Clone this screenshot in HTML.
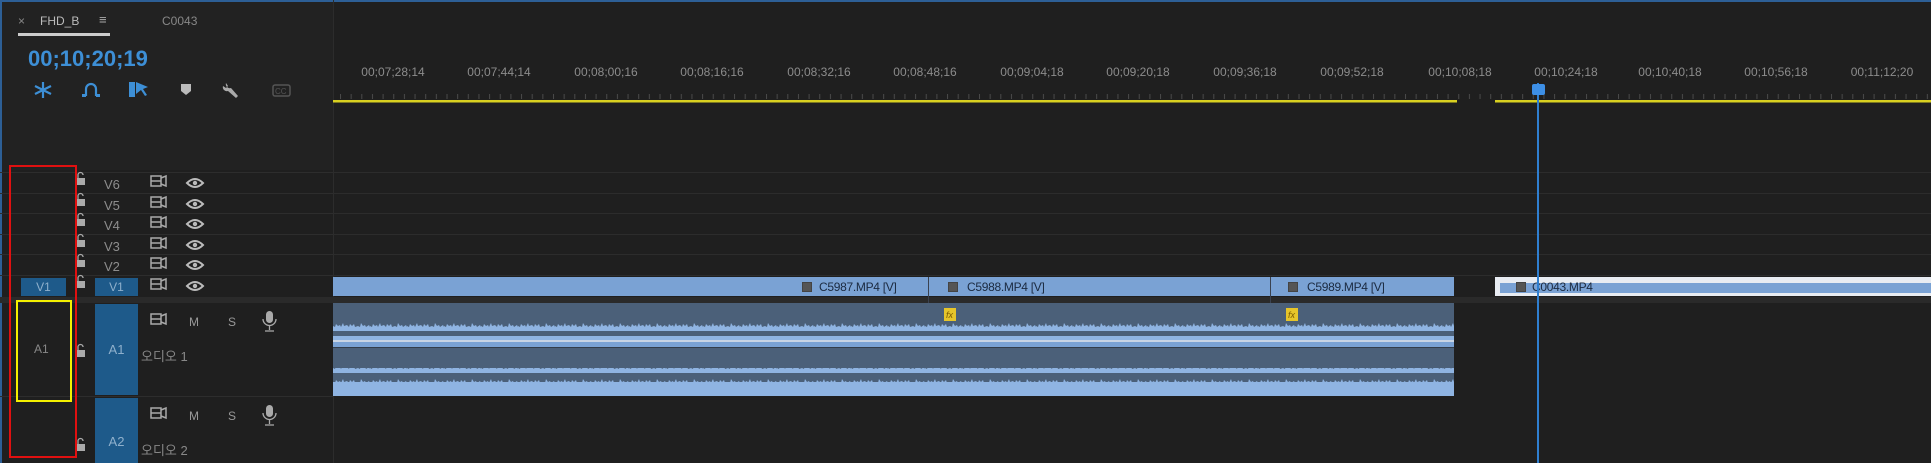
<!DOCTYPE html>
<html><head><meta charset="utf-8"><style>
*{margin:0;padding:0;box-sizing:border-box}
body{width:1931px;height:463px;background:#1f1f1f;position:relative;overflow:hidden;font-family:"Liberation Sans","Noto Sans CJK KR",sans-serif;color:#9a9a9a}
.a{position:absolute}
.row{position:absolute;left:0;width:333px;height:1px;background:#2d2d2d}
.rrow{position:absolute;left:333px;width:1598px;height:1px;background:#2c2c2c}
.vl{position:absolute;left:104px;font-size:13px;color:#8d8d8d}
.lbl{position:absolute;font-size:12px;color:#1b2a40;letter-spacing:-0.3px}
.fx{position:absolute;width:10px;height:10px;background:#555;border:1px solid #444}
</style></head><body>
<div class="a" style="left:0;top:0;width:1931px;height:2px;background:#2d5f96"></div>
<div class="a" style="left:0;top:0;width:2px;height:463px;background:#2d5f96"></div>
<div class="a" style="left:2px;top:2px;width:331px;height:168px;background:#222"></div>
<div class="a" style="left:18px;top:14px;font-size:12px;color:#888">×</div>
<div class="a" style="left:40px;top:14px;font-size:12px;color:#bbb">FHD_B</div>
<div class="a" style="left:99px;top:12px;font-size:13px;color:#aaa">≡</div>
<div class="a" style="left:18px;top:33px;width:92px;height:3px;background:#ccc"></div>
<div class="a" style="left:162px;top:14px;font-size:12px;color:#888">C0043</div>
<div class="a" style="left:28px;top:46px;font-size:22px;font-weight:bold;color:#3d8fd6">00;10;20;19</div>
<svg class="a" style="left:30px;top:78px" width="300" height="24" viewBox="0 0 300 24">
<g stroke="#3d8fd6" stroke-width="2.2" fill="none">
<path d="M13 4v16M5 8l16 8M5 16l16-8"/>
<path d="M56 18v-7a5 5 0 0 1 10 0v7"/>
</g>
<rect x="52" y="16" width="4" height="3" fill="#3d8fd6"/><rect x="66" y="16" width="4" height="3" fill="#3d8fd6"/>
<rect x="99" y="4" width="6" height="15" fill="#3d8fd6"/>
<path d="M106 4l12 5-5 2 4 6-2 1-4-6-5 4z" fill="#3d8fd6"/>
<path d="M151 6h10v7l-5 4-5-4z" fill="#bbb"/>
<path d="M196 5a4 4 0 0 0 5 5l7 8-2 2-8-7a4 4 0 0 1-5-5l3 2 2-2z" fill="#aaa"/>
<rect x="243" y="7" width="17" height="11" rx="2" fill="none" stroke="#555" stroke-width="1.5"/>
<text x="245" y="16" font-size="8" fill="#555" font-family="Liberation Sans">CC</text>
</svg>
<div class="a" style="left:333px;top:0;width:1px;height:463px;background:#2c2c2c"></div>
<svg class="a" style="left:0;top:60px" width="1931" height="45">
<g font-size="12" fill="#8c8c8c" font-family="Liberation Sans" text-anchor="middle">
<text x="393" y="16">00;07;28;14</text><text x="499" y="16">00;07;44;14</text><text x="606" y="16">00;08;00;16</text><text x="712" y="16">00;08;16;16</text><text x="819" y="16">00;08;32;16</text><text x="925" y="16">00;08;48;16</text><text x="1032" y="16">00;09;04;18</text><text x="1138" y="16">00;09;20;18</text><text x="1245" y="16">00;09;36;18</text><text x="1352" y="16">00;09;52;18</text><text x="1460" y="16">00;10;08;18</text><text x="1566" y="16">00;10;24;18</text><text x="1670" y="16">00;10;40;18</text><text x="1776" y="16">00;10;56;18</text><text x="1882" y="16">00;11;12;20</text>
</g>
<defs><pattern id="tk" x="340" y="0" width="10.65" height="45" patternUnits="userSpaceOnUse"><rect x="0" y="34" width="1" height="5" fill="#4a4a4a"/></pattern></defs>
<rect x="336" y="0" width="1595" height="45" fill="url(#tk)"/>
<rect x="333" y="40" width="1124" height="2.5" fill="#d8d020"/>
<rect x="1495" y="40" width="436" height="2.5" fill="#d8d020"/>
</svg>
<div class="row" style="top:172px"></div><div class="row" style="top:193px"></div><div class="row" style="top:213px"></div><div class="row" style="top:234px"></div><div class="row" style="top:254px"></div><div class="row" style="top:275px"></div>
<div class="rrow" style="top:172px"></div><div class="rrow" style="top:193px"></div><div class="rrow" style="top:213px"></div><div class="rrow" style="top:234px"></div><div class="rrow" style="top:254px"></div><div class="rrow" style="top:275px"></div>
<div class="a" style="left:0;top:297px;width:1931px;height:6px;background:#2a2a2a"></div>
<div class="a" style="left:0;top:396px;width:333px;height:1px;background:#2d2d2d"></div>
<div class="vl" style="top:177px">V6</div><div class="vl" style="top:198px">V5</div><div class="vl" style="top:218px">V4</div><div class="vl" style="top:239px">V3</div><div class="vl" style="top:259px">V2</div>
<div class="a" style="left:21px;top:278px;width:45px;height:18px;background:#1e5a8a;color:#8fb0cc;font-size:12px;text-align:center;line-height:18px">V1</div>
<div class="a" style="left:95px;top:278px;width:43px;height:18px;background:#1e5a8a;color:#8fb0cc;font-size:12px;text-align:center;line-height:18px">V1</div>
<div class="a" style="left:95px;top:304px;width:43px;height:91px;background:#1e5a8a;color:#8fb0cc;font-size:13px;text-align:center;line-height:91px">A1</div>
<div class="a" style="left:95px;top:398px;width:43px;height:65px;background:#1e5a8a;color:#8fb0cc;font-size:13px;text-align:center;padding-top:36px">A2</div>
<div class="a" style="left:34px;top:342px;font-size:12px;color:#888">A1</div>
<div class="a" style="left:141px;top:346px;font-size:13px;color:#888">오디오 1</div>
<div class="a" style="left:141px;top:440px;font-size:13px;color:#888">오디오 2</div>
<svg class="a" style="left:0;top:170px" width="333" height="293">
<g fill="#aaa">
<g id="lk"><rect x="76" y="8" width="9" height="7"/><path d="M78 8v-3a2.5 2.5 0 0 1 5 0" stroke="#aaa" fill="none" stroke-width="1.3"/></g>
<use href="#lk" y="21"/><use href="#lk" y="41"/><use href="#lk" y="62"/><use href="#lk" y="82"/><use href="#lk" y="103"/><use href="#lk" y="172"/><use href="#lk" y="266"/>
</g>
<g id="tg" fill="none" stroke="#aaa" stroke-width="1.5"><rect x="151" y="6" width="10" height="10"/><path d="M151 11h10M161 8l5-2v10l-5-2"/></g>
<use href="#tg" y="21"/><use href="#tg" y="41"/><use href="#tg" y="62"/><use href="#tg" y="82"/><use href="#tg" y="103"/><use href="#tg" y="138"/><use href="#tg" y="232"/>
<g id="ey"><path d="M187 13q8-8 16 0q-8 8-16 0z" fill="none" stroke="#bbb" stroke-width="2"/><circle cx="195" cy="13" r="2.2" fill="#bbb"/></g>
<use href="#ey" y="21"/><use href="#ey" y="41"/><use href="#ey" y="62"/><use href="#ey" y="82"/><use href="#ey" y="103"/>
<g font-size="12" fill="#999" font-family="Liberation Sans"><text x="189" y="156">M</text><text x="228" y="156">S</text><text x="189" y="250">M</text><text x="228" y="250">S</text></g>
<g id="mc" fill="#aaa"><rect x="266" y="141" width="7" height="12" rx="3.5"/><path d="M263 149a6.5 6.5 0 0 0 13 0M269.5 156v4M265 161h9" stroke="#aaa" fill="none" stroke-width="1.3"/></g>
<use href="#mc" y="94"/>
</svg>
<div class="a" style="left:333px;top:277px;width:1121px;height:19px;background:#7aa2d4"></div>
<div class="a" style="left:1495px;top:277px;width:436px;height:19px;background:#e8ecf2"></div>
<div class="a" style="left:1500px;top:283px;width:431px;height:10px;background:#7aa2d4"></div>
<div class="a" style="left:928px;top:277px;width:1px;height:119px;background:#3a4250"></div>
<div class="a" style="left:1270px;top:277px;width:1px;height:119px;background:#3a4250"></div>
<div class="fx" style="left:802px;top:282px"></div><div class="lbl" style="left:819px;top:280px">C5987.MP4 [V]</div>
<div class="fx" style="left:948px;top:282px"></div><div class="lbl" style="left:967px;top:280px">C5988.MP4 [V]</div>
<div class="fx" style="left:1288px;top:282px"></div><div class="lbl" style="left:1307px;top:280px">C5989.MP4 [V]</div>
<div class="fx" style="left:1516px;top:282px"></div><div class="lbl" style="left:1532px;top:280px">C0043.MP4</div>
<svg class="a" style="left:333px;top:303px" width="1121" height="93">
<defs><pattern id="wv" width="37" height="14" patternUnits="userSpaceOnUse"><path d="M0 14V9l2 1 1-3 2 2 2-1 1 2 2-4 1 3 3-1 2 2 1-3 2 2 2-2 1 3 3-1 2 1 1-4 2 3 2-1 1 2 3-2 1 2V14z" fill="#8fb4e2"/></pattern></defs>
<rect width="1121" height="93" fill="#4b6079"/>
<rect y="20" width="1121" height="14" fill="url(#wv)"/>
<rect y="33" width="1121" height="4" fill="#8fb4e2"/>
<rect y="37" width="1121" height="2" fill="#c8d4e4"/>
<rect y="39" width="1121" height="5" fill="#7aa2d4"/>
<rect y="44" width="1121" height="1" fill="#333d4a"/>
<rect y="65" width="1121" height="14" fill="url(#wv)"/>
<rect y="79" width="1121" height="14" fill="#8fb4e2"/>
<rect x="611" y="5" width="12" height="13" fill="#e6c52a"/><text x="613" y="15" font-size="9" fill="#7a5a00" font-style="italic">fx</text>
<rect x="953" y="5" width="12" height="13" fill="#e6c52a"/><text x="955" y="15" font-size="9" fill="#7a5a00" font-style="italic">fx</text>
</svg>
<div class="a" style="left:1537px;top:83px;width:2px;height:380px;background:#2f7fd0"></div>
<div class="a" style="left:1532px;top:84px;width:13px;height:11px;background:#3d8fe6;border-radius:2px"></div>
<div class="a" style="left:9px;top:165px;width:68px;height:293px;border:2px solid #e01010"></div>
<div class="a" style="left:16px;top:300px;width:56px;height:102px;border:2px solid #f4f000"></div>
</body></html>
